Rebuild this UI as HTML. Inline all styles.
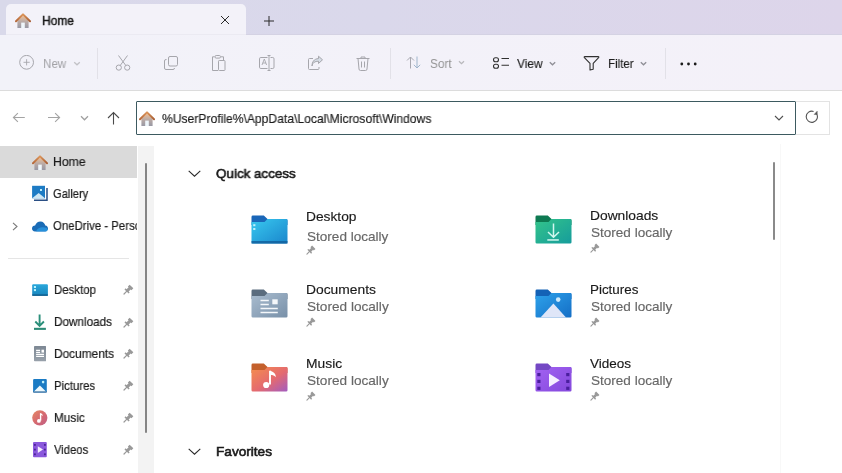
<!DOCTYPE html>
<html><head><meta charset="utf-8"><style>
html,body{margin:0;padding:0;width:842px;height:473px;overflow:hidden;background:#fff;font-family:'Liberation Sans',sans-serif;}
.r{position:absolute;display:block}
.t{position:absolute;line-height:20px;white-space:nowrap;will-change:transform;font-family:'Liberation Sans',sans-serif;}
</style></head><body>
<div class="r" style="left:0px;top:0px;width:842px;height:36px;background:linear-gradient(90deg,#d9d9ea 0%,#dad8eb 45%,#ddd5ea 100%);"></div>
<div class="r" style="left:6px;top:4px;width:240px;height:40px;background:#f3f2f9;border-radius:5px 5px 0 0"></div>
<div class="r" style="left:0px;top:35px;width:842px;height:56px;background:linear-gradient(90deg,#f2f2f9 0%,#f4f1f9 100%);"></div>
<div class="r" style="left:0px;top:90px;width:842px;height:1px;background:#dcdcdc;"></div>
<div class="r" style="left:246px;top:34px;width:596px;height:1px;background:#d4d2e3;"></div>
<div class="r" style="left:6px;top:34px;width:240px;height:1px;background:#ebeaf2;"></div>
<div class="r" style="left:0px;top:91px;width:842px;height:382px;background:#ffffff;"></div>
<svg class="r" style="left:15px;top:13px" width="16" height="16" viewBox="0 0 16 16"><defs><linearGradient id="hb" x1="0" y1="0" x2="0" y2="1"><stop offset="0" stop-color="#ecbf98"/><stop offset="0.5" stop-color="#b9aaa6"/><stop offset="1" stop-color="#9898a4"/></linearGradient><linearGradient id="hr" x1="0" y1="0" x2="1" y2="0"><stop offset="0" stop-color="#b5683a"/><stop offset="0.5" stop-color="#dc9458"/><stop offset="1" stop-color="#a85e34"/></linearGradient></defs>
<path d="M2.4 7.8 L8 2.6 L13.6 7.8 V15 H2.4 Z" fill="url(#hb)"/>
<path d="M1 8.2 L8 1.4 L15 8.2" fill="none" stroke="url(#hr)" stroke-width="2" stroke-linecap="round" stroke-linejoin="round"/>
<rect x="6.2" y="9.6" width="3.6" height="5.4" fill="#eef6fb"/></svg>
<div class="t" style="left:41.75px;top:11.0px;font-size:12.7px;color:#1a1a1a;font-weight:normal;transform:scaleX(0.9437);transform-origin:0 0;-webkit-text-stroke:0.45px #1a1a1a;">Home</div>
<svg class="r" style="left:220px;top:14.8px" width="10" height="10" viewBox="0 0 10 10"><path d="M1 1 L9 9 M9 1 L1 9" stroke="#2a2a2a" stroke-width="1"/></svg>
<svg class="r" style="left:264px;top:15.5px" width="10" height="10" viewBox="0 0 10 10"><path d="M5 0 V10 M0 5 H10" stroke="#2a2a2a" stroke-width="1"/></svg>
<svg class="r" style="left:19px;top:55px" width="16" height="16" viewBox="0 0 16 16"><circle cx="7.6" cy="7.3" r="6.9" fill="none" stroke="#a6a6ac" stroke-width="1"/><path d="M7.6 4.2 V10.4 M4.5 7.3 H10.7" stroke="#a6a6ac" stroke-width="0.9"/></svg>
<div class="t" style="left:42.50px;top:54.0px;font-size:13px;color:#a2a2a6;font-weight:normal;transform:scaleX(0.8939);transform-origin:0 0;">New</div>
<svg class="r" style="left:73px;top:60.5px" width="8" height="5" viewBox="0 0 8 5"><path d="M1.2 1.2 L4 3.8 L6.8 1.2" fill="none" stroke="#c2c2c6" stroke-width="1.3"/></svg>
<div class="r" style="left:97px;top:48px;width:1px;height:31px;background:#e2e1e8;"></div>
<svg class="r" style="left:115px;top:55px" width="16" height="16" viewBox="0 0 16 16"><path d="M3.5 0.5 L10.8 10.5 M12.5 0.5 L5.2 10.5" stroke="#a6a6ac" stroke-width="1" fill="none"/><circle cx="3.8" cy="12.6" r="2.6" fill="none" stroke="#a6a6ac"/><circle cx="12.2" cy="12.6" r="2.6" fill="none" stroke="#a6a6ac"/></svg>
<svg class="r" style="left:163px;top:55px" width="16" height="16" viewBox="0 0 16 16"><rect x="5.5" y="1.5" width="9" height="9.5" rx="1.5" fill="none" stroke="#a6a6ac"/><path d="M3.5 4.5 H3 A1.5 1.5 0 0 0 1.5 6 V13 A1.5 1.5 0 0 0 3 14.5 H10 A1.5 1.5 0 0 0 11.5 13" fill="none" stroke="#a6a6ac"/></svg>
<svg class="r" style="left:211px;top:55px" width="16" height="16" viewBox="0 0 16 16"><path d="M3.5 1.8 H1.5 V15.5 H7" fill="none" stroke="#a6a6ac"/><path d="M10 1.8 H12.5 V5.5" fill="none" stroke="#a6a6ac"/><rect x="4" y="0.5" width="5.5" height="2.6" rx="1.2" fill="none" stroke="#a6a6ac"/><rect x="7.5" y="5.5" width="6.5" height="10" rx="0.8" fill="none" stroke="#a6a6ac"/></svg>
<svg class="r" style="left:259px;top:55px" width="17" height="16" viewBox="0 0 17 16"><path d="M8.5 2.5 H1.8 A1.3 1.3 0 0 0 0.5 3.8 V12.2 A1.3 1.3 0 0 0 1.8 13.5 H8.5 M11.5 2.5 H13.7 A1.3 1.3 0 0 1 15 3.8 V12.2 A1.3 1.3 0 0 1 13.7 13.5 H11.5" fill="none" stroke="#a6a6ac"/><path d="M10 0.5 V15.5 M8.5 0.5 H11.5 M8.5 15.5 H11.5" stroke="#a6a6ac" fill="none"/><path d="M3 10 L5.3 4 L7.6 10 M3.8 8 H6.8" stroke="#a6a6ac" fill="none" stroke-width="0.9"/></svg>
<svg class="r" style="left:307px;top:55px" width="17" height="16" viewBox="0 0 17 16"><path d="M6 3.5 H2.5 A1 1 0 0 0 1.5 4.5 V13.5 A1 1 0 0 0 2.5 14.5 H11 A1 1 0 0 0 12 13.5 V12" fill="none" stroke="#a6a6ac"/><path d="M5 11 C5.5 7.5 8 6.2 11.5 6.2 V8.5 L15.5 4.8 L11.5 1.2 V3.6 C7 3.8 5 7 5 11 Z" fill="#d6dde6" stroke="#a6a6ac" stroke-linejoin="round"/></svg>
<svg class="r" style="left:355px;top:55px" width="16" height="16" viewBox="0 0 16 16"><path d="M1.5 3.5 H14.5 M6 3.5 V2 H10 V3.5" fill="none" stroke="#a6a6ac"/><path d="M3 3.5 L4 14 A1.5 1.5 0 0 0 5.5 15.5 H10.5 A1.5 1.5 0 0 0 12 14 L13 3.5" fill="none" stroke="#a6a6ac"/><path d="M6.5 6.5 V12.5 M9.5 6.5 V12.5" stroke="#a6a6ac"/></svg>
<div class="r" style="left:390px;top:48px;width:1px;height:31px;background:#e2e1e8;"></div>
<svg class="r" style="left:405px;top:56px" width="17" height="13" viewBox="0 0 17 13"><path d="M5.5 12.5 V1 M2 4.5 L5.5 1 L9 4.5" fill="none" stroke="#a8a8b0"/><path d="M12 0.5 V12 M8.8 8.8 L12 12 L15.2 8.8" fill="none" stroke="#9fb5cc"/></svg>
<div class="t" style="left:430.00px;top:54.0px;font-size:13px;color:#939393;font-weight:normal;transform:scaleX(0.9055);transform-origin:0 0;">Sort</div>
<svg class="r" style="left:458px;top:60px" width="7" height="5" viewBox="0 0 7 5"><path d="M1 1.2 L3.5 3.6 L6 1.2" fill="none" stroke="#b8b8bc" stroke-width="1.3"/></svg>
<svg class="r" style="left:492px;top:56px" width="18" height="13" viewBox="0 0 18 13"><rect x="1.5" y="1.8" width="5" height="4" rx="2" fill="none" stroke="#303030" stroke-width="1.1"/><rect x="1.5" y="8.3" width="5" height="4" rx="2" fill="none" stroke="#303030" stroke-width="1.1"/><path d="M9.5 2.5 H17 M9.5 9.3 H17" stroke="#303030" stroke-width="1.1"/></svg>
<div class="t" style="left:516.80px;top:54.0px;font-size:13px;color:#1f1f1f;font-weight:normal;transform:scaleX(0.9159);transform-origin:0 0;-webkit-text-stroke:0.15px #1f1f1f;">View</div>
<svg class="r" style="left:549px;top:60.5px" width="7" height="5" viewBox="0 0 7 5"><path d="M0.8 1.2 L3.5 3.8 L6.2 1.2" fill="none" stroke="#8f8f96" stroke-width="1.3"/></svg>
<svg class="r" style="left:583px;top:55px" width="17" height="16" viewBox="0 0 17 16"><path d="M1.8 1.6 H15.2 Q16.3 1.6 15.6 2.6 L10.2 8.3 V14.2 L7 15 V8.3 L1.4 2.6 Q0.7 1.6 1.8 1.6 Z" fill="none" stroke="#303030" stroke-width="1.1" stroke-linejoin="round"/></svg>
<div class="t" style="left:608.00px;top:54.0px;font-size:13px;color:#1f1f1f;font-weight:normal;transform:scaleX(0.8905);transform-origin:0 0;-webkit-text-stroke:0.15px #1f1f1f;">Filter</div>
<svg class="r" style="left:640px;top:60.5px" width="7" height="5" viewBox="0 0 7 5"><path d="M0.8 1.2 L3.5 3.8 L6.2 1.2" fill="none" stroke="#8f8f96" stroke-width="1.3"/></svg>
<div class="r" style="left:665px;top:48px;width:1px;height:31px;background:#e2e1e8;"></div>
<svg class="r" style="left:680px;top:62px" width="17" height="4" viewBox="0 0 17 4"><circle cx="1.8" cy="2" r="1.4" fill="#1a1a1a"/><circle cx="8.5" cy="2" r="1.4" fill="#1a1a1a"/><circle cx="15.2" cy="2" r="1.4" fill="#1a1a1a"/></svg>
<svg class="r" style="left:12px;top:112px" width="14" height="12" viewBox="0 0 14 12"><path d="M12.8 5.5 H1.5 M5.9 1.2 L1.4 5.5 L5.9 9.8" fill="none" stroke="#a4a4a4" stroke-width="1.1"/></svg>
<svg class="r" style="left:47px;top:112px" width="14" height="12" viewBox="0 0 14 12"><path d="M1 5.5 H12.5 M8.1 1.2 L12.6 5.5 L8.1 9.8" fill="none" stroke="#a4a4a4" stroke-width="1.1"/></svg>
<svg class="r" style="left:80px;top:114.5px" width="9" height="7" viewBox="0 0 9 7"><path d="M1 1.2 L4.5 4.8 L8 1.2" fill="none" stroke="#a0a0a0" stroke-width="1.25"/></svg>
<svg class="r" style="left:107px;top:111px" width="13" height="14" viewBox="0 0 13 14"><path d="M6.5 13.5 V1.5 M1 7 L6.5 1.5 L12 7" fill="none" stroke="#4a4a4a" stroke-width="1.1"/></svg>
<div class="r" style="left:136px;top:101px;width:660px;height:34px;background:#ffffff;box-sizing:border-box;border:1px solid #3d5a60;border-radius:1px"></div>
<svg class="r" style="left:139px;top:110.5px" width="16" height="16" viewBox="0 0 16 16"><defs><linearGradient id="hb" x1="0" y1="0" x2="0" y2="1"><stop offset="0" stop-color="#ecbf98"/><stop offset="0.5" stop-color="#b9aaa6"/><stop offset="1" stop-color="#9898a4"/></linearGradient><linearGradient id="hr" x1="0" y1="0" x2="1" y2="0"><stop offset="0" stop-color="#b5683a"/><stop offset="0.5" stop-color="#dc9458"/><stop offset="1" stop-color="#a85e34"/></linearGradient></defs>
<path d="M2.4 7.8 L8 2.6 L13.6 7.8 V15 H2.4 Z" fill="url(#hb)"/>
<path d="M1 8.2 L8 1.4 L15 8.2" fill="none" stroke="url(#hr)" stroke-width="2" stroke-linecap="round" stroke-linejoin="round"/>
<rect x="6.2" y="9.6" width="3.6" height="5.4" fill="#eef6fb"/></svg>
<div class="t" style="left:161.60px;top:108.7px;font-size:12.6px;color:#1a1a1a;font-weight:normal;transform:scaleX(0.9622);transform-origin:0 0;-webkit-text-stroke:0.15px #1a1a1a;">%UserProfile%\AppData\Local\Microsoft\Windows</div>
<svg class="r" style="left:774px;top:115px" width="10" height="6" viewBox="0 0 10 6"><path d="M1 1 L5 5 L9 1" fill="none" stroke="#505050" stroke-width="1.1"/></svg>
<div class="r" style="left:796px;top:101px;width:34px;height:34px;background:#ffffff;box-sizing:border-box;border:1px solid #e3e3e3;border-left:none"></div>
<svg class="r" style="left:805px;top:110px" width="14" height="14" viewBox="0 0 14 14"><path d="M8.6 1.45 A5.6 5.6 0 1 0 11.5 3.7" fill="none" stroke="#555" stroke-width="1.1"/><path d="M12.2 1.2 V4.4 H9.2 Z" fill="#555" stroke="#555" stroke-width="0.5" stroke-linejoin="round"/></svg>
<div class="r" style="left:0px;top:146px;width:137px;height:32px;background:#dadada;"></div>
<div class="r" style="left:138px;top:146px;width:16px;height:327px;background:#f3f3f3;"></div>
<div class="r" style="left:144.5px;top:163px;width:2.5px;height:270px;background:#858585;border-radius:2px"></div>
<div class="t" style="left:53.40px;top:151.6px;font-size:12.4px;color:#1a1a1a;font-weight:normal;transform:scaleX(0.9847);transform-origin:0 0;-webkit-text-stroke:0.2px #1a1a1a;">Home</div>
<div class="t" style="left:53.40px;top:183.9px;font-size:12.4px;color:#1a1a1a;font-weight:normal;transform:scaleX(0.8980);transform-origin:0 0;-webkit-text-stroke:0.2px #1a1a1a;">Gallery</div>
<div class="r" style="left:52px;top:210px;width:85px;height:28px;overflow:hidden"><div class="t" style="left:1.40px;top:6.1px;font-size:12.4px;color:#1a1a1a;-webkit-text-stroke:0.2px #1a1a1a;transform:scaleX(0.92);transform-origin:0 0">OneDrive - Personal</div></div>
<svg class="r" style="left:32px;top:154.5px" width="16" height="16" viewBox="0 0 16 16"><defs><linearGradient id="hb" x1="0" y1="0" x2="0" y2="1"><stop offset="0" stop-color="#ecbf98"/><stop offset="0.5" stop-color="#b9aaa6"/><stop offset="1" stop-color="#9898a4"/></linearGradient><linearGradient id="hr" x1="0" y1="0" x2="1" y2="0"><stop offset="0" stop-color="#b5683a"/><stop offset="0.5" stop-color="#dc9458"/><stop offset="1" stop-color="#a85e34"/></linearGradient></defs>
<path d="M2.4 7.8 L8 2.6 L13.6 7.8 V15 H2.4 Z" fill="url(#hb)"/>
<path d="M1 8.2 L8 1.4 L15 8.2" fill="none" stroke="url(#hr)" stroke-width="2" stroke-linecap="round" stroke-linejoin="round"/>
<rect x="6.2" y="9.6" width="3.6" height="5.4" fill="#eef6fb"/></svg>
<svg class="r" style="left:32px;top:185px" width="16" height="17" viewBox="0 0 16 17"><rect x="0.1" y="0.8" width="12.9" height="12.5" fill="#1d7bc4"/><path d="M0.1 13.3 L6.7 8 L13 13.3 Z" fill="#cde6f4"/><rect x="8" y="4" width="2" height="2" fill="#bdeefc"/><path d="M15 3 V15.2 H2" fill="none" stroke="#2a4f84" stroke-width="1.5"/></svg>
<svg class="r" style="left:32px;top:220.5px" width="16" height="11" viewBox="0 0 16 11"><path d="M3 10.5 C1.2 10.5 0 9.3 0 7.6 C0 5.9 1.3 4.6 3.1 4.6 C3.9 1.9 6 0.4 8.5 0.4 C11 0.4 12.8 2.1 13.3 4.5 C15 4.7 16 6.1 16 7.6 C16 9.3 14.8 10.5 13 10.5 Z" fill="#1a6cb6"/><path d="M4 10.5 C5 7.5 8 6.2 11 6.3 C13.5 6.4 15.5 7.2 15.9 8.2 C15.6 9.6 14.5 10.5 13 10.5 Z" fill="#2a9ae4" opacity="0.8"/></svg>
<svg class="r" style="left:12px;top:222px" width="6" height="9" viewBox="0 0 6 9"><path d="M1 0.8 L5 4.5 L1 8.2" fill="none" stroke="#7a7a7a" stroke-width="1.1"/></svg>
<div class="r" style="left:8px;top:258px;width:121px;height:1px;background:#e5e5e5;"></div>
<div class="t" style="left:53.60px;top:280.0px;font-size:12.4px;color:#1a1a1a;font-weight:normal;transform:scaleX(0.9229);transform-origin:0 0;-webkit-text-stroke:0.2px #1a1a1a;">Desktop</div>
<svg class="r" style="left:123.2px;top:283.4px" width="12" height="12" viewBox="0 0 12 12"><path d="M5.60 10.51 L6.66 9.44 L5.67 8.45 L7.72 6.40 L8.50 7.18 L10.33 5.34 L6.66 1.67 L4.82 3.50 L5.60 4.28 L3.55 6.33 L2.56 5.34 L1.49 6.40 Z" fill="#999999"/><path d="M1 11 L3.9 8.1" stroke="#999999" stroke-width="1.2" stroke-linecap="round"/></svg>
<div class="t" style="left:53.60px;top:312.2px;font-size:12.4px;color:#1a1a1a;font-weight:normal;transform:scaleX(0.9459);transform-origin:0 0;-webkit-text-stroke:0.2px #1a1a1a;">Downloads</div>
<svg class="r" style="left:123.2px;top:315.59999999999997px" width="12" height="12" viewBox="0 0 12 12"><path d="M5.60 10.51 L6.66 9.44 L5.67 8.45 L7.72 6.40 L8.50 7.18 L10.33 5.34 L6.66 1.67 L4.82 3.50 L5.60 4.28 L3.55 6.33 L2.56 5.34 L1.49 6.40 Z" fill="#999999"/><path d="M1 11 L3.9 8.1" stroke="#999999" stroke-width="1.2" stroke-linecap="round"/></svg>
<div class="t" style="left:53.60px;top:344.0px;font-size:12.4px;color:#1a1a1a;font-weight:normal;transform:scaleX(0.9579);transform-origin:0 0;-webkit-text-stroke:0.2px #1a1a1a;">Documents</div>
<svg class="r" style="left:123.2px;top:347.4px" width="12" height="12" viewBox="0 0 12 12"><path d="M5.60 10.51 L6.66 9.44 L5.67 8.45 L7.72 6.40 L8.50 7.18 L10.33 5.34 L6.66 1.67 L4.82 3.50 L5.60 4.28 L3.55 6.33 L2.56 5.34 L1.49 6.40 Z" fill="#999999"/><path d="M1 11 L3.9 8.1" stroke="#999999" stroke-width="1.2" stroke-linecap="round"/></svg>
<div class="t" style="left:53.60px;top:375.9px;font-size:12.4px;color:#1a1a1a;font-weight:normal;transform:scaleX(0.9181);transform-origin:0 0;-webkit-text-stroke:0.2px #1a1a1a;">Pictures</div>
<svg class="r" style="left:123.2px;top:379.29999999999995px" width="12" height="12" viewBox="0 0 12 12"><path d="M5.60 10.51 L6.66 9.44 L5.67 8.45 L7.72 6.40 L8.50 7.18 L10.33 5.34 L6.66 1.67 L4.82 3.50 L5.60 4.28 L3.55 6.33 L2.56 5.34 L1.49 6.40 Z" fill="#999999"/><path d="M1 11 L3.9 8.1" stroke="#999999" stroke-width="1.2" stroke-linecap="round"/></svg>
<div class="t" style="left:53.60px;top:407.8px;font-size:12.4px;color:#1a1a1a;font-weight:normal;transform:scaleX(0.9486);transform-origin:0 0;-webkit-text-stroke:0.2px #1a1a1a;">Music</div>
<svg class="r" style="left:123.2px;top:411.2px" width="12" height="12" viewBox="0 0 12 12"><path d="M5.60 10.51 L6.66 9.44 L5.67 8.45 L7.72 6.40 L8.50 7.18 L10.33 5.34 L6.66 1.67 L4.82 3.50 L5.60 4.28 L3.55 6.33 L2.56 5.34 L1.49 6.40 Z" fill="#999999"/><path d="M1 11 L3.9 8.1" stroke="#999999" stroke-width="1.2" stroke-linecap="round"/></svg>
<div class="t" style="left:53.60px;top:440.0px;font-size:12.4px;color:#1a1a1a;font-weight:normal;transform:scaleX(0.9073);transform-origin:0 0;-webkit-text-stroke:0.2px #1a1a1a;">Videos</div>
<svg class="r" style="left:123.2px;top:443.4px" width="12" height="12" viewBox="0 0 12 12"><path d="M5.60 10.51 L6.66 9.44 L5.67 8.45 L7.72 6.40 L8.50 7.18 L10.33 5.34 L6.66 1.67 L4.82 3.50 L5.60 4.28 L3.55 6.33 L2.56 5.34 L1.49 6.40 Z" fill="#999999"/><path d="M1 11 L3.9 8.1" stroke="#999999" stroke-width="1.2" stroke-linecap="round"/></svg>
<svg class="r" style="left:32px;top:284px" width="16" height="12" viewBox="0 0 16 12"><defs><linearGradient id="sdk" x1="0" y1="0" x2="0" y2="1"><stop offset="0" stop-color="#2aa8dc"/><stop offset="1" stop-color="#1784bc"/></linearGradient></defs><rect x="0.2" y="0.2" width="15.7" height="11.6" rx="1" fill="url(#sdk)"/><rect x="0.2" y="10.4" width="15.7" height="1.4" fill="#0f5c8c"/><rect x="1.9" y="2" width="2.1" height="2" fill="#b8f2fc"/><rect x="1.9" y="5.1" width="2.1" height="2" fill="#b8f2fc"/></svg>
<svg class="r" style="left:33px;top:313px" width="14" height="18" viewBox="0 0 14 18"><path d="M6.6 1.6 V12.6 M2.3 8.5 L6.6 12.8 L10.9 8.5" fill="none" stroke="#2b8f7a" stroke-width="1.9"/><rect x="1" y="14.8" width="11.9" height="2.1" fill="#2d8a76"/></svg>
<svg class="r" style="left:33.8px;top:346.3px" width="12.2" height="15.4" viewBox="0 0 12.2 15.4"><defs><linearGradient id="sdc" x1="0" y1="0" x2="0" y2="1"><stop offset="0" stop-color="#7d8894"/><stop offset="1" stop-color="#98a1ab"/></linearGradient></defs><rect x="0" y="0" width="12.1" height="15.3" rx="0.8" fill="url(#sdc)"/><path d="M2.1 4.4 H6.1 M2.1 6.4 H6.1 M2.1 8.4 H10 M2.1 10.4 H10" stroke="#ffffff" stroke-width="1.2"/><rect x="7.5" y="3.7" width="2.5" height="2.9" fill="#ffffff"/></svg>
<svg class="r" style="left:33px;top:379.3px" width="14" height="13.6" viewBox="0 0 14 13.6"><rect x="0.1" y="0.1" width="13.7" height="13.3" rx="1" fill="#1b7bc4"/><path d="M0.6 12.8 L6.9 6.5 L13.2 12.8 Z" fill="#ecf8fd"/><circle cx="10.1" cy="3.1" r="1.3" fill="#bdf0fc"/><rect x="0.1" y="12.6" width="13.7" height="0.8" fill="#1d4f80"/></svg>
<svg class="r" style="left:32px;top:410px" width="16" height="16" viewBox="0 0 16 16"><defs><linearGradient id="mg" x1="0" y1="0" x2="1" y2="1"><stop offset="0" stop-color="#e58a64"/><stop offset="0.5" stop-color="#d66a70"/><stop offset="1" stop-color="#c05f86"/></linearGradient></defs><circle cx="7.8" cy="7.8" r="7.6" fill="url(#mg)"/><path d="M8.6 3.2 V10.6" stroke="#fff" stroke-width="1.4"/><circle cx="6.9" cy="10.9" r="1.9" fill="#fff"/><path d="M8.6 3.2 C9.8 3.6 11 4.4 10.8 6.2 C10.2 5.4 9.4 5.1 8.6 5.1 Z" fill="#fff"/></svg>
<svg class="r" style="left:33px;top:442.3px" width="14" height="15.4" viewBox="0 0 14 15.4"><rect x="0" y="0" width="13.8" height="15.2" rx="1" fill="#8a58dc"/><path d="M4.8 4.3 L10 7.6 L4.8 10.9 Z" fill="#f4ecff"/><rect x="1" y="2" width="1.8" height="1.8" fill="#4b2596"/><rect x="1" y="6.7" width="1.8" height="1.8" fill="#4b2596"/><rect x="1" y="11.4" width="1.8" height="1.8" fill="#4b2596"/><rect x="11" y="2" width="1.8" height="1.8" fill="#4b2596"/><rect x="11" y="6.7" width="1.8" height="1.8" fill="#4b2596"/><rect x="11" y="11.4" width="1.8" height="1.8" fill="#4b2596"/></svg>
<svg class="r" style="left:188px;top:170px" width="13" height="7" viewBox="0 0 13 7"><path d="M0.7 0.8 L6.5 6.2 L12.3 0.8" fill="none" stroke="#2a2a2a" stroke-width="1.1"/></svg>
<div class="t" style="left:216.30px;top:163.8px;font-size:13.6px;color:#1a1a1a;font-weight:normal;transform:scaleX(0.9858);transform-origin:0 0;-webkit-text-stroke:0.6px #1a1a1a;">Quick access</div>
<svg class="r" style="left:188px;top:448px" width="13" height="7" viewBox="0 0 13 7"><path d="M0.7 0.8 L6.5 6.2 L12.3 0.8" fill="none" stroke="#2a2a2a" stroke-width="1.1"/></svg>
<div class="t" style="left:216.30px;top:441.9px;font-size:13.6px;color:#1a1a1a;font-weight:normal;transform:scaleX(1.0019);transform-origin:0 0;-webkit-text-stroke:0.6px #1a1a1a;">Favorites</div>
<div class="r" style="left:772.5px;top:161.5px;width:2.6px;height:78px;background:#8a8a8a;border-radius:2px"></div>
<div class="r" style="left:780px;top:144px;width:1px;height:329px;background:#f8f8f8;"></div>
<div class="t" style="left:305.95px;top:206.5px;font-size:13.3px;color:#1a1a1a;font-weight:normal;transform:scaleX(1.0356);transform-origin:0 0;-webkit-text-stroke:0.15px #1a1a1a;">Desktop</div>
<div class="t" style="left:306.75px;top:226.7px;font-size:13.3px;color:#676767;font-weight:normal;transform:scaleX(1.0198);transform-origin:0 0;-webkit-text-stroke:0.15px #676767;">Stored locally</div>
<svg class="r" style="left:306.15px;top:243.8px" width="11" height="11" viewBox="0 0 12 12"><path d="M5.60 10.51 L6.66 9.44 L5.67 8.45 L7.72 6.40 L8.50 7.18 L10.33 5.34 L6.66 1.67 L4.82 3.50 L5.60 4.28 L3.55 6.33 L2.56 5.34 L1.49 6.40 Z" fill="#999999"/><path d="M1 11 L3.9 8.1" stroke="#999999" stroke-width="1.2" stroke-linecap="round"/></svg>
<svg class="r" style="left:250.5px;top:215.1px" width="37" height="29" viewBox="0 0 37 29"><defs><linearGradient id="gdesk" x1="0" y1="0" x2="1" y2="1"><stop offset="0" stop-color="#38c8ef"/><stop offset="1" stop-color="#1a86cc"/></linearGradient></defs><path d="M0.5 2 Q0.5 0.6 1.9 0.6 H12.8 L16.5 4.1 H35.1 Q36.5 4.1 36.5 5.5 V10 H0.5 Z" fill="#1a66b8"/><path d="M0.5 6.9 H13.5 L16.5 4.1 H35.1 Q36.5 4.1 36.5 5.5 V27.2 Q36.5 28.6 35.1 28.6 H1.9 Q0.5 28.6 0.5 27.2 Z" fill="url(#gdesk)"/><rect x="0.5" y="26" width="36" height="2.6" fill="#12609e" opacity="0.85"/><rect x="2.2" y="9.2" width="2.2" height="2" fill="#bff0fc"/><rect x="2.2" y="13" width="2.2" height="2" fill="#bff0fc"/></svg>
<div class="t" style="left:589.95px;top:205.8px;font-size:13.3px;color:#1a1a1a;font-weight:normal;transform:scaleX(1.0377);transform-origin:0 0;-webkit-text-stroke:0.15px #1a1a1a;">Downloads</div>
<div class="t" style="left:590.75px;top:222.7px;font-size:13.3px;color:#676767;font-weight:normal;transform:scaleX(1.0186);transform-origin:0 0;-webkit-text-stroke:0.15px #676767;">Stored locally</div>
<svg class="r" style="left:590.15px;top:241.5px" width="11" height="11" viewBox="0 0 12 12"><path d="M5.60 10.51 L6.66 9.44 L5.67 8.45 L7.72 6.40 L8.50 7.18 L10.33 5.34 L6.66 1.67 L4.82 3.50 L5.60 4.28 L3.55 6.33 L2.56 5.34 L1.49 6.40 Z" fill="#999999"/><path d="M1 11 L3.9 8.1" stroke="#999999" stroke-width="1.2" stroke-linecap="round"/></svg>
<svg class="r" style="left:534.5px;top:215.1px" width="37" height="29" viewBox="0 0 37 29"><defs><linearGradient id="gdown" x1="0" y1="0" x2="1" y2="1"><stop offset="0" stop-color="#33c48a"/><stop offset="1" stop-color="#169c9c"/></linearGradient></defs><path d="M0.5 2 Q0.5 0.6 1.9 0.6 H12.8 L16.5 4.1 H35.1 Q36.5 4.1 36.5 5.5 V10 H0.5 Z" fill="#0e7a52"/><path d="M0.5 6.9 H13.5 L16.5 4.1 H35.1 Q36.5 4.1 36.5 5.5 V27.2 Q36.5 28.6 35.1 28.6 H1.9 Q0.5 28.6 0.5 27.2 Z" fill="url(#gdown)"/><path d="M18.5 8.5 V22 M13 17 L18.5 22.3 L24 17" fill="none" stroke="#d2f7ee" stroke-width="1.5"/><rect x="12.3" y="24.2" width="11.5" height="1.5" fill="#d2f7ee"/></svg>
<div class="t" style="left:305.95px;top:279.8px;font-size:13.3px;color:#1a1a1a;font-weight:normal;transform:scaleX(1.0394);transform-origin:0 0;-webkit-text-stroke:0.15px #1a1a1a;">Documents</div>
<div class="t" style="left:306.75px;top:296.7px;font-size:13.3px;color:#676767;font-weight:normal;transform:scaleX(1.0236);transform-origin:0 0;-webkit-text-stroke:0.15px #676767;">Stored locally</div>
<svg class="r" style="left:306.15px;top:315.6px" width="11" height="11" viewBox="0 0 12 12"><path d="M5.60 10.51 L6.66 9.44 L5.67 8.45 L7.72 6.40 L8.50 7.18 L10.33 5.34 L6.66 1.67 L4.82 3.50 L5.60 4.28 L3.55 6.33 L2.56 5.34 L1.49 6.40 Z" fill="#999999"/><path d="M1 11 L3.9 8.1" stroke="#999999" stroke-width="1.2" stroke-linecap="round"/></svg>
<svg class="r" style="left:250.5px;top:289.1px" width="37" height="29" viewBox="0 0 37 29"><defs><linearGradient id="gdoc" x1="0" y1="0" x2="1" y2="1"><stop offset="0" stop-color="#a9bccf"/><stop offset="1" stop-color="#7890a8"/></linearGradient></defs><path d="M0.5 2 Q0.5 0.6 1.9 0.6 H12.8 L16.5 4.1 H35.1 Q36.5 4.1 36.5 5.5 V10 H0.5 Z" fill="#5a6c7e"/><path d="M0.5 6.9 H13.5 L16.5 4.1 H35.1 Q36.5 4.1 36.5 5.5 V27.2 Q36.5 28.6 35.1 28.6 H1.9 Q0.5 28.6 0.5 27.2 Z" fill="url(#gdoc)"/><path d="M9.5 11.4 H17.8 M9.5 15.4 H17.8 M9.5 19.4 H26.8 M9.5 23.4 H26.8" stroke="#f4f7fa" stroke-width="1.5"/><rect x="21.3" y="10.3" width="5.4" height="5" fill="#f4f7fa"/></svg>
<div class="t" style="left:589.95px;top:279.8px;font-size:13.3px;color:#1a1a1a;font-weight:normal;transform:scaleX(1.0070);transform-origin:0 0;-webkit-text-stroke:0.15px #1a1a1a;">Pictures</div>
<div class="t" style="left:590.75px;top:296.7px;font-size:13.3px;color:#676767;font-weight:normal;transform:scaleX(1.0186);transform-origin:0 0;-webkit-text-stroke:0.15px #676767;">Stored locally</div>
<svg class="r" style="left:590.15px;top:315.6px" width="11" height="11" viewBox="0 0 12 12"><path d="M5.60 10.51 L6.66 9.44 L5.67 8.45 L7.72 6.40 L8.50 7.18 L10.33 5.34 L6.66 1.67 L4.82 3.50 L5.60 4.28 L3.55 6.33 L2.56 5.34 L1.49 6.40 Z" fill="#999999"/><path d="M1 11 L3.9 8.1" stroke="#999999" stroke-width="1.2" stroke-linecap="round"/></svg>
<svg class="r" style="left:534.5px;top:289.1px" width="37" height="29" viewBox="0 0 37 29"><defs><linearGradient id="gpic" x1="0" y1="0" x2="1" y2="1"><stop offset="0" stop-color="#2ea2ea"/><stop offset="1" stop-color="#146ec6"/></linearGradient></defs><path d="M0.5 2 Q0.5 0.6 1.9 0.6 H12.8 L16.5 4.1 H35.1 Q36.5 4.1 36.5 5.5 V10 H0.5 Z" fill="#1462b6"/><path d="M0.5 6.9 H13.5 L16.5 4.1 H35.1 Q36.5 4.1 36.5 5.5 V27.2 Q36.5 28.6 35.1 28.6 H1.9 Q0.5 28.6 0.5 27.2 Z" fill="url(#gpic)"/><path d="M5.5 28.6 L18.4 14.5 L31 28.6 Z" fill="#dfe6f8"/><circle cx="23.2" cy="10.6" r="2.3" fill="#cdeafc"/></svg>
<div class="t" style="left:305.95px;top:353.8px;font-size:13.3px;color:#1a1a1a;font-weight:normal;transform:scaleX(1.0414);transform-origin:0 0;-webkit-text-stroke:0.15px #1a1a1a;">Music</div>
<div class="t" style="left:306.75px;top:370.7px;font-size:13.3px;color:#676767;font-weight:normal;transform:scaleX(1.0236);transform-origin:0 0;-webkit-text-stroke:0.15px #676767;">Stored locally</div>
<svg class="r" style="left:306.15px;top:390.0px" width="11" height="11" viewBox="0 0 12 12"><path d="M5.60 10.51 L6.66 9.44 L5.67 8.45 L7.72 6.40 L8.50 7.18 L10.33 5.34 L6.66 1.67 L4.82 3.50 L5.60 4.28 L3.55 6.33 L2.56 5.34 L1.49 6.40 Z" fill="#999999"/><path d="M1 11 L3.9 8.1" stroke="#999999" stroke-width="1.2" stroke-linecap="round"/></svg>
<svg class="r" style="left:250.5px;top:363.1px" width="37" height="29" viewBox="0 0 37 29"><defs><linearGradient id="gmus" x1="0" y1="0" x2="1" y2="1"><stop offset="0" stop-color="#f58e4c"/><stop offset="0.55" stop-color="#e46a70"/><stop offset="1" stop-color="#a25cc0"/></linearGradient></defs><path d="M0.5 2 Q0.5 0.6 1.9 0.6 H12.8 L16.5 4.1 H35.1 Q36.5 4.1 36.5 5.5 V10 H0.5 Z" fill="#c4602c"/><path d="M0.5 6.9 H13.5 L16.5 4.1 H35.1 Q36.5 4.1 36.5 5.5 V27.2 Q36.5 28.6 35.1 28.6 H1.9 Q0.5 28.6 0.5 27.2 Z" fill="url(#gmus)"/><path d="M19 7.8 V21.5" stroke="#fff" stroke-width="1.9"/><circle cx="15.2" cy="22" r="3.1" fill="#fff"/><path d="M19 7.8 C21.5 8.6 25 10 24.8 14.2 C23.8 12.6 21.5 12 19.5 12 Z" fill="#fff"/></svg>
<div class="t" style="left:589.95px;top:353.8px;font-size:13.3px;color:#1a1a1a;font-weight:normal;transform:scaleX(1.0178);transform-origin:0 0;-webkit-text-stroke:0.15px #1a1a1a;">Videos</div>
<div class="t" style="left:590.75px;top:370.7px;font-size:13.3px;color:#676767;font-weight:normal;transform:scaleX(1.0186);transform-origin:0 0;-webkit-text-stroke:0.15px #676767;">Stored locally</div>
<svg class="r" style="left:590.15px;top:390.0px" width="11" height="11" viewBox="0 0 12 12"><path d="M5.60 10.51 L6.66 9.44 L5.67 8.45 L7.72 6.40 L8.50 7.18 L10.33 5.34 L6.66 1.67 L4.82 3.50 L5.60 4.28 L3.55 6.33 L2.56 5.34 L1.49 6.40 Z" fill="#999999"/><path d="M1 11 L3.9 8.1" stroke="#999999" stroke-width="1.2" stroke-linecap="round"/></svg>
<svg class="r" style="left:534.5px;top:363.1px" width="37" height="29" viewBox="0 0 37 29"><defs><linearGradient id="gvid" x1="0" y1="0" x2="1" y2="1"><stop offset="0" stop-color="#a262f2"/><stop offset="1" stop-color="#8448dc"/></linearGradient></defs><path d="M0.5 2 Q0.5 0.6 1.9 0.6 H12.8 L16.5 4.1 H35.1 Q36.5 4.1 36.5 5.5 V10 H0.5 Z" fill="#7448c4"/><path d="M0.5 6.9 H13.5 L16.5 4.1 H35.1 Q36.5 4.1 36.5 5.5 V27.2 Q36.5 28.6 35.1 28.6 H1.9 Q0.5 28.6 0.5 27.2 Z" fill="url(#gvid)"/><rect x="2.3" y="10" width="3.2" height="3.2" fill="#4a1f9e"/><rect x="2.3" y="16.8" width="3.2" height="3.2" fill="#4a1f9e"/><rect x="2.3" y="23.7" width="3.2" height="3.2" fill="#4a1f9e"/><rect x="31.2" y="10" width="3.2" height="3.2" fill="#4a1f9e"/><rect x="31.2" y="16.8" width="3.2" height="3.2" fill="#4a1f9e"/><rect x="31.2" y="23.7" width="3.2" height="3.2" fill="#4a1f9e"/><path d="M14 10.5 L24.8 17.2 L14 24 Z" fill="#f6efff"/></svg>
</body></html>
